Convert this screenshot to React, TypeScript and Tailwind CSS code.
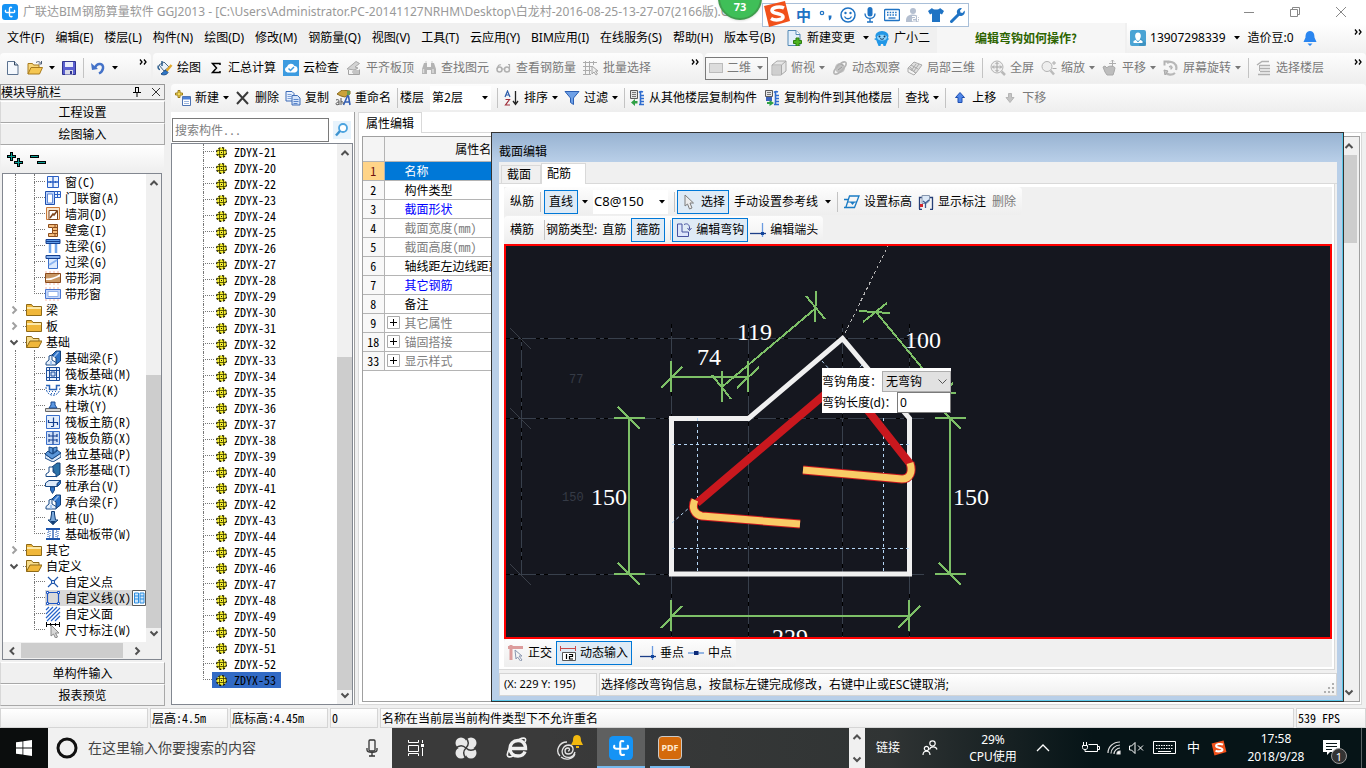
import { useState } from 'react';
import type { ReactNode } from 'react';
import clsx from 'clsx';

// ---------- shared bits ----------

const SONG = "font-['Noto_Sans_CJK_SC',sans-serif] [font-feature-settings:'hwid']";

function Svg({ children, size = 16, className }: { children: ReactNode; size?: number; className?: string }) {
  return (
    <svg width={size} height={size} viewBox="0 0 16 16" fill="none" className={clsx('shrink-0', className)} aria-hidden="true">
      {children}
    </svg>
  );
}

const ICONS: Record<string, ReactNode> = {
  newDoc: (
    <>
      <path d="M2.500 1.500h7L13 5v9.500H2.500z" fill="#f4f8fd" stroke="#5b7290" />
      <path d="M9.500 1.500V5H13" fill="#c9d8ea" stroke="#33475f" />
    </>
  ),
  open: (
    <>
      <path d="M1 14V3.500h4.500l1 1.500H12V8" fill="#f7d67a" stroke="#a87a1c" />
      <path d="M1 14L4 7.500h11.500L12.500 14z" fill="#f5c752" stroke="#a87a1c" />
      <path d="M9 2.500c2-1.500 4-1 5 1M14.500 1v3h-3" stroke="#4e5d75" />
    </>
  ),
  save: (
    <>
      <path d="M1.500 1.500h13v13h-13z" fill="#5a5fd0" stroke="#30358f" />
      <path d="M4 2h8v5H4z" fill="#e9ecfb" />
      <path d="M4 10h8v4.500H4z" fill="#d9dbe8" />
      <path d="M9 11h2v3H9z" fill="#30358f" />
    </>
  ),
  undo: (
    <>
      <path d="M5 8C7 2 14 3 13 8.500c-.5 2.500-2 4-4 5" stroke="#4472c8" strokeWidth="2.500" />
      <path d="M1 3l1 7 6-1z" fill="#4472c8" />
    </>
  ),
  paint: (
    <>
      <path d="M2 5l5-3 5 5-5 4z" fill="#e9f1fa" stroke="#4a6785" />
      <path d="M1.500 5.500c-1 2 0 4 1.500 4M5 1v5" stroke="#2d5f8f" strokeWidth="1.500" />
      <path d="M14.500 5L9 11.500" stroke="#e2a92c" strokeWidth="2.500" />
      <path d="M9 10.500c-2 0-3 2-5 3.500 2 1.500 6 1 7-1.500z" fill="#2f78c9" stroke="#1c4c86" />
    </>
  ),
  sigma: <path d="M12 5V3.500H4.500L8.500 8l-4 4.500H12V11" stroke="#000" strokeWidth="1.500" />,
  cloud: (
    <>
      <path d="M0 0h16v16H0z" fill="#3c9be0" />
      <path d="M4.500 12.500a3 3 0 01-.5-5.800 4 4 0 017.500-.7 3.300 3.300 0 01.5 6.500z" fill="#fff" />
      <path d="M5.500 8.500l2 2 3.500-3.500" stroke="#3c9be0" strokeWidth="1.500" />
    </>
  ),
  align: (
    <>
      <path d="M1 9l9-7.500 3.500 2L9 7l3 1-4 2-6-1z" fill="#d4d4d4" stroke="#a8a8a8" />
      <path d="M2.500 10v4.500h11v-5M6 12h8M10 9.500v5" fill="none" stroke="#a3a3a3" />
      <path d="M7 10h6v4H7z" fill="#c4c4c4" />
    </>
  ),
  binoc: (
    <>
      <path d="M3 3h3v4h4V3h3l2 6v5h-5v-4H6v4H1V9z" fill="#b4b4b4" />
      <path d="M4 2h2M10 2h2M2.500 9v4M12 9v4" stroke="#dcdcdc" strokeWidth="1.500" />
    </>
  ),
  glasses: (
    <>
      <circle cx="3.500" cy="9.500" r="2.500" stroke="#b0b0b0" strokeWidth="1.500" />
      <circle cx="11" cy="9.500" r="2.500" stroke="#b0b0b0" strokeWidth="1.500" />
      <path d="M6 9h2.500M1 9c1-3 2-5 4-4M13.500 9V4.500H12" stroke="#b0b0b0" strokeWidth="1.200" />
    </>
  ),
  batch: (
    <>
      <path d="M0 2.500h14M0 6.500h9M0 10.500h8M0 14.500h8M2.500 1v14M6.500 1v14M10.500 1v4" stroke="#acacac" />
      <path d="M9 6v8l2-2 2 3 1.500-1-2-3h2.500z" fill="#eee" stroke="#a5a5a5" />
    </>
  ),
  cube: (
    <>
      <path d="M1 5l5-4h9v10l-5 4H1z" fill="#e6e6e6" stroke="#aaa" />
      <path d="M1 5h9.500v10M10.500 5L15 1" stroke="#aaa" />
      <path d="M2 6h8v8H2z" fill="#cfcfcf" />
    </>
  ),
  orbit: (
    <>
      <circle cx="8" cy="8" r="5" fill="#c2c2c2" />
      <path d="M5 6c3-3 6-2 6 0M6 10l4-3" stroke="#9a9a9a" />
      <ellipse cx="8" cy="8" rx="8" ry="3" transform="rotate(-45 8 8)" stroke="#b5b5b5" strokeWidth="1.500" />
    </>
  ),
  part3d: (
    <>
      <path d="M1 8l6-6 8 3-6 8z" fill="#dedede" stroke="#ababab" />
      <path d="M4 5l7 4M3 7l5 6M9 4l-5 7M12 4L7 11M1 8v4l6 3 2-2" stroke="#ababab" />
    </>
  ),
  full: (
    <>
      <circle cx="7" cy="7" r="6" stroke="#b3b3b3" fill="#eee" />
      <path d="M7 2.500v9M2.500 7h9M5.500 4L7 2.500 8.500 4M5.500 10L7 11.500 8.500 10M4 5.500L2.500 7 4 8.500M10 5.500L11.500 7 10 8.500" stroke="#a4a4a4" />
      <path d="M11.500 11.500L15 15" stroke="#b9b9b9" strokeWidth="2.500" />
    </>
  ),
  zoom: (
    <>
      <circle cx="6" cy="6.500" r="5" stroke="#b3b3b3" fill="#eee" />
      <path d="M9.500 10.500L13 14.500" stroke="#bbb" strokeWidth="2.500" />
      <path d="M11 3h4M13 1v4M11.500 8.500h4" stroke="#adadad" />
    </>
  ),
  pan: (
    <>
      <path d="M1 7l2-1 2 2c0-2 7-3 8 0l-1 4-1 3H5l-2-3z" fill="#bdbdbd" stroke="#a8a8a8" />
      <path d="M10.500 0v7M7 3.500h7M9 1.500L10.500 0 12 1.500" stroke="#adadad" />
    </>
  ),
  rotate: (
    <>
      <path d="M.5 1.500h6M1.500.5v5" stroke="#b3b3b3" strokeWidth="2" />
      <path d="M4 3a6 6 0 019 7M12 13a7 7 0 01-10-1" stroke="#b8b8b8" strokeWidth="2.200" />
      <path d="M6 7c1-2 4-1 3 1l-1 1.500M1 10l4 1-3 4z" stroke="#a8a8a8" fill="#c4c4c4" />
    </>
  ),
  floors: (
    <>
      <path d="M1 5L6 1.500h7M4 5.500h10M4 8.500h10M4 11.500h10M2 14.500h12" stroke="#b0b0b0" strokeWidth="1.500" />
      <path d="M3.500 5v6" stroke="#b0b0b0" />
    </>
  ),
  create: (
    <>
      <path d="M7.500 6.500h8v9h-8z" fill="#fff" stroke="#4f74b3" />
      <path d="M8 7h7v2.500H8z" fill="#4a7fd8" />
      <path d="M9 11.500h5M9 13.500h5" stroke="#9db7df" />
      <path d="M3 .5h2v2.500h2.500v2H5v2.500H3V5H.5V3H3z" fill="#f6dc5c" stroke="#9c7d18" />
    </>
  ),
  del: <path d="M2 2l11 12M13 2L2 14" stroke="#3a3a3a" strokeWidth="2" />,
  copy: (
    <>
      <path d="M1 1.500h6l2 2V11H1z" fill="#e8f1ff" stroke="#3d6bb5" />
      <path d="M2.500 4.500h4M2.500 6.500h4M2.500 8.500h4" stroke="#7ea1d8" />
      <path d="M7 5.500h5.500L15 8v7H7z" fill="#d4e4fb" stroke="#3d6bb5" />
      <path d="M8.500 9.500h5M8.500 11.500h5M8.500 13.500h4" stroke="#5b86ca" />
    </>
  ),
  rename: (
    <>
      <path d="M2 4l5-4 8 1v3l-5 3-4-1z" fill="#caa23b" stroke="#8b6a1e" />
      <path d="M12 1h3v4h-3z" fill="#6f9c49" />
      <path d="M8.500 15l4-9h1l1.500 9M10 12h5" stroke="#3560b5" strokeWidth="1.600" />
      <path d="M1 10c2-1 3 0 3 1v4M4 12c-2 0-3 1-3 2s2 1 3 0M6 8v7M6 12c1-1 3 0 2 2" stroke="#555" />
    </>
  ),
  sort: (
    <>
      <path d="M1 7l2.500-6L6 7M2 5h3" stroke="#2b5caa" strokeWidth="1.200" />
      <path d="M1.500 9.500h4l-4 5.500h4.500" stroke="#a02e3a" strokeWidth="1.200" />
      <path d="M11.500 1v12M9 11l2.500 3.500L14 11" stroke="#222" strokeWidth="1.300" />
    </>
  ),
  filter: <path d="M1 1.500h14L9.500 8v6.500l-3-2V8z" fill="#6ea0e6" stroke="#2c5fb3" />,
  copyFrom: (
    <>
      <path d="M1.500.5h7v8h-7z" fill="#e4e4e4" stroke="#5a5a5a" />
      <path d="M3 2.500h4M3 4.500h4M3 6.500h4" stroke="#777" />
      <path d="M10 2.500c1-1 3-1 4-.5M11.500 2v13M11.500 5.500H15M11.500 8.500H15M11.500 11.500H15M10 14.500h5" stroke="#2f6ccf" strokeWidth="1.600" />
      <path d="M8.500 11H6V9l-4 3.500L6 16v-2.500h2.500z" fill="#2fa045" />
    </>
  ),
  copyTo: (
    <>
      <path d="M1.500.5h7v6h-7z" fill="#e4e4e4" stroke="#5a5a5a" />
      <path d="M3 2.500h4M3 4.500h4" stroke="#777" />
      <path d="M10 2.500c1-1 3-1 4-.5M11.500 2v13M11.500 5.500H15M11.500 8.500H15M11.500 11.500H15M10 14.500h5" stroke="#2f6ccf" strokeWidth="1.600" />
      <path d="M2 7h6v4H2z" fill="#3b62bd" />
      <path d="M3 12h2.500v-2L10 13l-4.500 3v-2H3z" fill="#2fa045" />
    </>
  ),
  up: <path d="M8 2.500l4.500 5H10v5H6v-5H3.500z" fill="#4f86e8" stroke="#1f4fb0" />,
  down: <path d="M8 12.500l4-5h-2.500V3.500h-3v4H4z" fill="#c4c4c4" stroke="#b5b5b5" />,
  newChange: (
    <>
      <path d="M1 .5h8l4 4v11H1z" fill="#e2effa" stroke="#5389b5" />
      <path d="M9 .5v4h4" fill="#fff" stroke="#5389b5" />
      <path d="M9 8h3v2.500h2.500v3H12V16H9v-2.500H6.500v-3H9z" fill="#4cb41f" stroke="#2d7d10" />
    </>
  ),
  mascot: (
    <>
      <path d="M2 8C0 4 4 1 8 1s8 3 6 7l1 1-1.500 1.500C13 13 12 14 11.500 16h-2L9 14H7l-.5 2h-2C4 14 3 13 2.500 10.500L0 9z" fill="#2297e6" />
      <path d="M3 6.500c2-2.500 8-2.500 10 0 0 3-2 4-5 4s-5-1-5-4z" fill="#8ed4fb" />
      <circle cx="5.500" cy="6.500" r="1" fill="#123c66" />
      <circle cx="10.500" cy="6.500" r="1" fill="#123c66" />
      <path d="M6 8.500c1.500 1 2.500 1 4 0" stroke="#123c66" />
    </>
  ),
  account: (
    <>
      <rect width="16" height="16" rx="2" fill="#4aa3d4" />
      <path d="M10 8l6 5v3H9z" fill="#2f81b0" opacity=".5" />
      <path d="M8 2.500c3.500 0 3.500 5 1.500 7l3 1.500v2h-9v-2l3-1.500C4.500 7.500 4.500 2.500 8 2.500z" fill="#fff" />
      <path d="M6.500 10L8 12l1.500-2" stroke="#4aa3d4" />
    </>
  ),
  bell: <path d="M8 1c-4 0-4.500 4-4.500 6.500L1.500 12h13l-2-4.500C12.500 5 12 1 8 1zM5.500 13.500L8 16l2.500-2.500z" fill="#2a86f0" />,
  elevation: (
    <>
      <path d="M0 5.500h4M0 13.500h10.500L15 2H5.500L2 13" stroke="#1a7bc4" strokeWidth="1.300" />
      <path d="M4 8h9" stroke="#1a7bc4" />
      <path d="M6 8h5l-2.500 3z" fill="#1a7bc4" />
    </>
  ),
  showMark: (
    <>
      <path d="M1.500 15V3.500H4M14.500 15V3.500H12M1 15.500h3M12 15.500h3" stroke="#253f77" strokeWidth="1.300" />
      <path d="M4 1.500h7.500v5.500l-3 2.500H4z" fill="#dbe8f7" stroke="#8696ae" />
      <path d="M5 7l2.500 2L11 6M7.500 9v5" stroke="#3d5a8f" strokeWidth="1.300" />
      <path d="M2 10h3v3H2z" fill="#d3232a" />
    </>
  ),
  cursor: <path d="M4 1v11l2.500-2 2 5 2.500-1-2-5h3.500z" fill="#ececec" stroke="#7d7d7d" />,
  hook: (
    <>
      <path d="M1.500 2v12.500h11V10H6V2z" fill="#dde6fb" stroke="#47529f" />
      <path d="M8 2.500c4-2 6 1 5.500 5M11.500 6l2 2.500 2-2.500" stroke="#47529f" />
    </>
  ),
  perp: (
    <>
      <path d="M0 11.500h16" stroke="#1d3f88" strokeWidth="1.300" />
      <path d="M12.500 1v14" stroke="#6a9be0" strokeWidth="1.300" />
      <path d="M11 10h3v3h-3z" fill="#11449a" />
    </>
  ),
  mid: (
    <>
      <path d="M0 8h16" stroke="#5d92d8" strokeWidth="1.300" />
      <path d="M6 6h4.500v4H6z" fill="#0d2a78" />
    </>
  ),
  ortho: (
    <>
      <path d="M0 2.500h15M3 0v15" stroke="#dc9c9c" strokeWidth="3" />
      <path d="M7 5l7 6h-3l3 4-1.500 1-3-4-1.500 2z" fill="#f4f4f4" stroke="#8a97b0" />
    </>
  ),
  dynInput: (
    <>
      <path d="M.5 1v5M15.500 1v5M1 3.500h14" stroke="#c94a4a" />
      <path d="M2.500 7.500h13v8h-13z" fill="#fff" stroke="#555" />
      <path d="M6.500 9v5M9 9.500h3.500v2H9.500v2.500h3.500" stroke="#000" strokeWidth="1.200" />
    </>
  ),
  // module tree
  window: (
    <>
      <path d="M2.500 2.500h11v11h-11z" fill="#eaf3ff" stroke="#2a5fc4" />
      <path d="M8 2v12M2 8h12" stroke="#2a5fc4" strokeWidth="1.300" />
      <path d="M5.500 7v2M10.500 7v2" stroke="#2a5fc4" />
    </>
  ),
  doorWindow: (
    <>
      <path d="M.5 1.500h9v13h-9z" fill="#bcd3fa" stroke="#1f4fae" />
      <path d="M2.500 4h5v9h-5z" fill="#fff" stroke="#5d86d6" />
      <path d="M9.500 1.500h6v6h-6zM12.500 1v7M9 4.500h7" fill="#eaf3ff" stroke="#2a5fc4" />
    </>
  ),
  wallHole: (
    <>
      <path d="M1.500 1.500h13v12h-13z" fill="#fbe6cd" stroke="#c97838" />
      <path d="M4 4.500h8.500v9H4z" fill="#fff" stroke="#7c421a" />
      <path d="M5 12l3-4 1 1 3-4" stroke="#7c421a" strokeWidth="1.500" />
    </>
  ),
  niche: (
    <>
      <path d="M3.500 2.500h9v12h-9v-3h4v-6h-4z" fill="#f6bd7c" stroke="#8a4c1c" />
      <path d="M8 5.500h4M8 8.500h4M8 11.500h4M10 3v3M10 12v2" stroke="#8a4c1c" />
    </>
  ),
  linkBeam: (
    <>
      <path d="M1 1.500h14v4H1z" fill="#5f9ce8" stroke="#143f8f" />
      <path d="M1 3.500h14" stroke="#143f8f" />
      <path d="M5 6v9M11 6v9" stroke="#6fa5ec" strokeWidth="2.500" />
    </>
  ),
  lintel: (
    <>
      <path d="M3.500 4.500h9v10h-9z" fill="#dbe9fd" stroke="#3a6fca" />
      <path d="M1 1.500h14v3H1z" fill="#8ab4f0" stroke="#143f8f" />
      <path d="M4 11l8-5" stroke="#8ab4f0" strokeWidth="2" />
    </>
  ),
  stripHole: (
    <>
      <path d="M.5 3.500h15v9H.5z" fill="#c99764" stroke="#8a4a1a" />
      <path d="M1 8.500c5 0 9-1 14-4.500v2.500L6 10H1z" fill="#fff" />
      <path d="M0 14h16M0 2h16" stroke="#f7b7a8" strokeDasharray="2 2" />
    </>
  ),
  stripWindow: (
    <>
      <path d="M.5 3.500h15v9H.5z" fill="#c5d7fa" stroke="#4a76cf" />
      <path d="M3 5.500h10v5H3z" fill="#fff" stroke="#90b0ea" />
      <path d="M0 14h16M0 2h16" stroke="#f7b7a8" strokeDasharray="2 2" />
    </>
  ),
  baseBeam: (
    <>
      <path d="M7 5l4-4h4.500v10L11 14.500V8z" fill="#2c72c8" stroke="#123e75" />
      <path d="M1 15v-2.500l3-2.500V6l3-1v5l4 2.500V15z" fill="#e5effb" stroke="#1a4a86" />
      <path d="M9 7l4.500-5M6 11v4" stroke="#8fb8ea" strokeWidth="1.500" />
    </>
  ),
  raft: (
    <>
      <path d="M1.500 1.500h13v13h-13z" stroke="#1d4f9c" fill="#eaf2fd" />
      <path d="M4.500 1v14M11.500 1v14M1 4.500h14M1 11.500h14" stroke="#1d4f9c" />
      <path d="M6 6h4v4H6z" stroke="#1d4f9c" fill="#cfe0f8" />
    </>
  ),
  sump: (
    <>
      <path d="M1 3.500h3.500v4h7v-4H15" stroke="#2b64b8" strokeWidth="1.500" />
      <path d="M1 5c0 11 14 11 14 0" stroke="#2b64b8" strokeDasharray="2 1" />
      <path d="M4 9.500h1M7 9.500h1M10 9.500h1M6 11.500h1M9 11.500h1" stroke="#2b64b8" />
    </>
  ),
  pier: (
    <>
      <path d="M.5 10.500h15v3H.5z" fill="#d5d5d5" stroke="#686868" />
      <path d="M4 10l2-3V4h4v3l2 3z" fill="#5b96e0" stroke="#1c4a90" />
    </>
  ),
  raftMain: (
    <>
      <path d="M1.500 1.500h13v13h-13z" fill="#e3eefc" stroke="#3a6fca" />
      <path d="M3.500 6v2.500h9V11M8.500 3.500v9M8.500 12.500H6" stroke="#143f8f" strokeWidth="1.200" />
    </>
  ),
  raftNeg: (
    <>
      <path d="M1.500 1.500h13v13h-13z" fill="#cfdff7" stroke="#3a6fca" />
      <path d="M8 2v12M4 4v3M12 4v3M4 6h8M4 10h8M4 9v3M12 9v3" stroke="#143f8f" strokeWidth="1.200" />
    </>
  ),
  isolated: (
    <>
      <path d="M0 8l7 5 9-6v4l-8 5-8-4z" fill="#dce9f9" stroke="#1a4a86" />
      <path d="M0 8l3-3 4 3 5-4 4 3-9 6zM4 1l4 1v6L4 6zM8 2l4-1v4L8 8z" fill="#5b96d8" stroke="#1a4a86" />
    </>
  ),
  strip: (
    <>
      <path d="M7 5l5-4h3v11l-4 3z" fill="#2c72a8" stroke="#123e75" />
      <path d="M1 14.500V12l3-2V5h4v5l3 2v2.500z" fill="#fff" stroke="#1a4a86" />
    </>
  ),
  pileCap: (
    <>
      <path d="M.5 5L4 2.500h11.500L12 5.500v3H.5z" fill="#dce9f9" stroke="#1a4a86" />
      <path d="M5.500 9h4v3l-2 3.500-2-3.500zM12.500 5.500l3-3v3l-3 3z" fill="#2c72c8" stroke="#1a4a86" />
    </>
  ),
  pile: (
    <>
      <path d="M6.500 1.500h3V4l1 6h2.500l-5 4.500L3 10h2.500l1-6z" fill="#7aa8da" stroke="#123e75" />
      <path d="M5 11h6l-3 4z" fill="#123e75" />
    </>
  ),
  slabBand: (
    <>
      <path d="M1 3h14M1 13h14" stroke="#1f56ad" strokeWidth="2" />
      <path d="M8 3v10" stroke="#1f56ad" strokeWidth="1.300" />
      <path d="M3 5h2v6H3zM11 5h2v6h-2z" stroke="#1f56ad" strokeDasharray="1 1" />
    </>
  ),
  cPoint: (
    <>
      <path d="M3 3l10 10M13 3L3 13" stroke="#1f56ad" strokeWidth="1.200" />
      <path d="M6.500 6.500h3v3h-3z" fill="#cfe0f8" stroke="#1f56ad" />
    </>
  ),
  cLine: (
    <>
      <path d="M2.500 2.500h11v11h-11z" stroke="#1f56c4" strokeWidth="1.200" />
      <path d="M1.500 1.500h2v2h-2zM12.500 1.500h2v2h-2zM1.500 12.500h2v2h-2zM12.500 12.500h2v2h-2z" fill="#fff" stroke="#1f56c4" />
    </>
  ),
  cFace: <path d="M1 4l3-3M1 8l7-7M1 12L12 1M2 15L15 2M6 15l9-9M10 15l5-5" stroke="#2563c9" strokeWidth="1.200" />,
  dim: (
    <>
      <path d="M1.500 0v5M14.500 0v5M1 2.500h14M5.500 1v3M10.500 1v3" stroke="#000" />
      <path d="M6 3v11l2.500-2 2 4 2-1-2-4h3.500z" fill="#d8d8d8" stroke="#8a8a8a" />
    </>
  ),
  folder: (
    <>
      <path d="M.5 13.500v-11h5l1.500 2h8.500v9z" fill="#f0b73a" stroke="#8f6a17" />
      <path d="M1 6h14" stroke="#fde9a9" strokeWidth="2" />
    </>
  ),
  folderOpen: (
    <>
      <path d="M.5 13.500v-11h5l1.500 2h6v3" fill="#f7dc8b" stroke="#8f6a17" />
      <path d="M.5 13.500L4 7h12l-3.500 6.500z" fill="#f0b73a" stroke="#8f6a17" />
    </>
  ),
};

function Ico({ name, size }: { name: string; size?: number }) {
  return <Svg size={size}>{ICONS[name]}</Svg>;
}

const Caret = ({ dim }: { dim?: boolean }) => (
  <svg width="6" height="4" viewBox="0 0 6 4" className={clsx('shrink-0', dim ? 'fill-[#777]' : 'fill-black')} aria-hidden="true">
    <path d="M0 0h6L3 3.500z" />
  </svg>
);

const Sep = () => <span className="h-5 w-px shrink-0 bg-[#c3c3c3]" />;

const More = () => (
  <button aria-label="更多" className="mb-3 shrink-0">
    <svg width="8" height="6" viewBox="0 0 8 6" fill="none" stroke="#000" strokeWidth="1.300" aria-hidden="true">
      <path d="M1 .5L3 3 1 5.500M5 .5L7 3 5 5.500" />
    </svg>
  </button>
);

function Tool({ icon, label, arrow, off, on }: { icon?: string; label: string; arrow?: boolean; off?: boolean; on?: boolean }) {
  return (
    <button
      disabled={off}
      className={clsx(
        'flex shrink-0 items-center gap-1 whitespace-nowrap',
        off ? 'text-[#7a7a7a]' : 'text-black',
        on && 'h-6 border border-[#0078d7] bg-[#dfebf6] px-[3px]',
      )}
    >
      {icon && <Ico name={icon} />}
      {label}
      {arrow && <Caret dim={off} />}
    </button>
  );
}

function Arrow({ dir, soft }: { dir: 'up' | 'down' | 'left' | 'right'; soft?: boolean }) {
  const d = {
    up: 'M1.500 7L5 3.500 8.500 7',
    down: 'M1.500 3.500L5 7l3.500-3.500',
    left: 'M7 1.500L3.500 5 7 8.500',
    right: 'M3.500 1.500L7 5 3.500 8.500',
  };
  return (
    <svg width="10" height="10" viewBox="0 0 10 10" fill="none" stroke={soft ? '#a0a0a0' : '#505050'} strokeWidth="2" className="shrink-0" aria-hidden="true">
      <path d={d[dir]} />
    </svg>
  );
}

// ---------- title + menu ----------

const AppLogo = ({ size = 16 }: { size?: number }) => (
  <Svg size={size}>
    <rect width="16" height="16" rx="3" fill="#1593f5" />
    <path d="M9.500 3.500C8 3 7.500 3.500 7.500 5v6c0 1.500 1 2 2.500 1.500M3.500 6.500C3 8 4 8.500 5 8.500h6.500c1 0 1.500-.5 1-2" stroke="#fff" strokeWidth="1.400" strokeLinecap="round" />
  </Svg>
);

const SogouLogo = ({ size }: { size: number }) => (
  <svg width={size} height={size} viewBox="0 0 28 28" fill="none" className="shrink-0" aria-hidden="true">
    <path d="M1 6L22 1l5 20L6 27z" fill="#f1511b" />
    <path d="M21 8c-4-2-12-1-12 2.500 0 4 11 2 11 6.500 0 3-8 4-12 1.500" stroke="#fff" strokeWidth="3.600" />
  </svg>
);

function ImeBar() {
  return (
    <div className="absolute left-[718px] top-0 z-30 flex items-start">
      <div className="-mt-6 flex h-11 w-11 items-end justify-center rounded-full border-2 border-[#3f9e4d] bg-[#3fbf58] pb-[2px] text-[11px] font-bold leading-[18px] text-white shadow">
        73
      </div>
      <div className="mt-[3px] flex h-6 items-center gap-[6px] border border-[#a9bfd8] bg-white pl-[33px] pr-[2px] text-[#1f73c4]">
        <span className="absolute left-[45px] top-0"><SogouLogo size={28} /></span>
        <span className="w-4 text-[15px] font-bold leading-4">中</span>
        <Svg>
          <circle cx="4" cy="6" r="1.700" stroke="#1f73c4" strokeWidth="1.200" />
          <path d="M10.500 8.500h3c0 3-.5 4-2.500 5" fill="#1f73c4" />
        </Svg>
        <Svg>
          <circle cx="8" cy="8" r="7" stroke="#1f73c4" strokeWidth="1.500" />
          <path d="M4.500 9.500c1.500 3 5.500 3 7 0" stroke="#1f73c4" strokeWidth="1.300" />
          <circle cx="5.500" cy="6" r="1.200" fill="#1f73c4" />
          <circle cx="10.500" cy="6" r="1.200" fill="#1f73c4" />
        </Svg>
        <Svg>
          <rect x="5.500" y="0" width="5" height="9.500" rx="2.500" fill="#1f73c4" />
          <path d="M3 6.500c0 6.500 10 6.500 10 0M8 11.500V15M5 15h6" stroke="#1f73c4" strokeWidth="1.400" />
        </Svg>
        <Svg>
          <rect x=".5" y="2.500" width="15" height="11" rx="1" stroke="#1f73c4" strokeWidth="1.400" />
          <path d="M3 5.500h10M3 8h10" stroke="#1f73c4" strokeWidth="1.400" strokeDasharray="1.500 1.200" />
          <path d="M4.500 11h7" stroke="#1f73c4" strokeWidth="1.300" />
        </Svg>
        <Svg>
          <circle cx="7" cy="4" r="3" fill="#b4bfd0" />
          <path d="M0 13c0-7 12-7 13-2v4H0z" fill="#b4bfd0" />
          <path d="M6 9.500h3.500v2H6.500V14H10M11.500 9.500h3.500M11.500 9v5h3.500v-2.500h-3" stroke="#fff" />
        </Svg>
        <Svg>
          <path d="M0 4l4-3c1 2 7 2 8 0l4 3-2 3.500-2-1V15H4V6.500l-2 1z" fill="#1f73c4" />
        </Svg>
        <Svg>
          <path d="M1.500 14.500L9 7" stroke="#1f73c4" strokeWidth="3" strokeLinecap="round" />
          <path d="M14.500 3.500A4 4 0 1112 1.200L10 3.500l.5 2 2 .5z" fill="#1f73c4" />
        </Svg>
      </div>
    </div>
  );
}

const MENUS = [
  '文件(F)', '编辑(E)', '楼层(L)', '构件(N)', '绘图(D)', '修改(M)', '钢筋量(Q)', '视图(V)',
  '工具(T)', '云应用(Y)', 'BIM应用(I)', '在线服务(S)', '帮助(H)', '版本号(B)',
];

function TitleBar() {
  return (
    <header className="relative flex h-[23px] shrink-0 items-center bg-white pl-[2px]">
      <AppLogo />
      <h1 className="ml-[5px] flex-1 overflow-hidden whitespace-pre text-xs text-[#999]">
        广联达BIM钢筋算量软件 GGJ2013 - [C:\Users\Administrator.PC-20141127NRHM\Desktop\白龙村-2016-08-25-13-27-07(2166版).GGJ]
      </h1>
      <div className="flex gap-9 pr-5">
        <button aria-label="最小化">
          <svg width="10" height="10" stroke="#888" aria-hidden="true"><path d="M0 5.500h10" /></svg>
        </button>
        <button aria-label="还原">
          <svg width="10" height="10" stroke="#888" fill="none" aria-hidden="true"><path d="M.5 2.500h7v7h-7zM2.500 2.500v-2h7v7h-2" /></svg>
        </button>
        <button aria-label="关闭">
          <svg width="10" height="10" stroke="#888" aria-hidden="true"><path d="M0 0l10 10M10 0L0 10" /></svg>
        </button>
      </div>
      <ImeBar />
    </header>
  );
}

function MenuBar() {
  return (
    <nav className="flex h-[30px] shrink-0 items-stretch bg-[#f0f0f0]">
      <div className="flex items-center gap-[11px] pl-[7px]">
        {MENUS.map((m) => (
          <button key={m} className="whitespace-nowrap">{m}</button>
        ))}
      </div>
      <div className="ml-3 flex items-center gap-[5px] pr-[7px]">
        <button className="flex items-center gap-1 whitespace-nowrap">
          <Ico name="newChange" />
          <span className="mr-1">新建变更</span>
          <Caret />
        </button>
        <Tool icon="mascot" label="广小二" />
      </div>
      <div className="flex w-[188px] items-center bg-[#f6f6f6] pl-[38px]">
        <a href="#help" className={clsx('whitespace-nowrap font-bold text-[#2d6400]', SONG)}>编辑弯钩如何操作?</a>
      </div>
      <div className="ml-[2px] flex flex-1 items-center gap-2 bg-linear-to-b from-white to-[#f0f0f0] pl-[3px] pr-1">
        <button className="flex items-center gap-1 whitespace-nowrap">
          <Ico name="account" />
          <span className="mr-1">13907298339</span>
          <Caret />
        </button>
        <button className="whitespace-nowrap">造价豆:0</button>
        <Ico name="bell" />
        <span className="flex-1" />
        <More />
      </div>
    </nav>
  );
}

const BAR = 'flex items-center rounded-sm bg-linear-to-b from-[#fdfdfd] to-[#eeeeee]';

function MainToolbar() {
  return (
    <div className="flex h-[30px] shrink-0 gap-[2px] bg-[#f0f0f0]">
      <div className={clsx(BAR, 'w-[151px] shrink-0 gap-[6px] pl-[5px] pr-1')}>
        <button aria-label="新建"><Ico name="newDoc" /></button>
        <button aria-label="打开" className="flex items-center gap-[6px]"><Ico name="open" /><Caret /></button>
        <button aria-label="保存"><Ico name="save" /></button>
        <Sep />
        <button aria-label="撤销" className="flex items-center gap-[6px]"><Ico name="undo" /><Caret /></button>
        <span className="flex-1" />
        <More />
      </div>
      <div className={clsx(BAR, 'w-[550px] shrink-0 gap-[7px] pl-1 pr-1')}>
        <Tool icon="paint" label="绘图" />
        <Tool icon="sigma" label="汇总计算" />
        <Tool icon="cloud" label="云检查" />
        <Tool icon="align" label="平齐板顶" off />
        <Tool icon="binoc" label="查找图元" off />
        <Tool icon="glasses" label="查看钢筋量" off />
        <Tool icon="batch" label="批量选择" off />
        <span className="flex-1" />
        <More />
      </div>
      <div className={clsx(BAR, 'flex-1 gap-[7px] pr-1')}>
        <label className="-mr-1 flex h-[23px] items-center border border-[#7a7a7a] pl-[3px] pr-1 text-[#7a7a7a]">
          <span className="h-[10px] w-[14px] border border-[#bbb] bg-[#dcdcdc]" />
          <select aria-label="视图模式" disabled className="ml-[4px] w-[30px] appearance-none text-xs">
            <option>二维</option>
          </select>
          <Caret dim />
        </label>
        <Tool icon="cube" label="俯视" arrow off />
        <Tool icon="orbit" label="动态观察" off />
        <Tool icon="part3d" label="局部三维" off />
        <Sep />
        <Tool icon="full" label="全屏" off />
        <Tool icon="zoom" label="缩放" arrow off />
        <Tool icon="pan" label="平移" arrow off />
        <Tool icon="rotate" label="屏幕旋转" arrow off />
        <Sep />
        <Tool icon="floors" label="选择楼层" off />
        <span className="flex-1" />
        <More />
      </div>
    </div>
  );
}

function ComponentToolbar() {
  return (
    <div className={clsx(BAR, 'h-[28px] shrink-0 gap-[6px] pl-1')}>
      <Tool icon="create" label="新建" arrow />
      <Tool icon="del" label="删除" />
      <Tool icon="copy" label="复制" />
      <Tool icon="rename" label="重命名" />
      <Sep />
      <label htmlFor="floor" className="-ml-1 whitespace-nowrap">楼层</label>
      <span className="flex h-6 items-center bg-white pr-[3px]">
        <select id="floor" className="w-[52px] appearance-none pl-[2px] text-xs">
          <option>第2层</option>
          <option>第1层</option>
        </select>
        <Caret />
      </span>
      <Sep />
      <Tool icon="sort" label="排序" arrow />
      <Tool icon="filter" label="过滤" arrow />
      <Sep />
      <div className="-ml-[2px] flex items-center gap-[7px]">
        <Tool icon="copyFrom" label="从其他楼层复制构件" />
        <Tool icon="copyTo" label="复制构件到其他楼层" />
      </div>
      <Sep />
      <Tool label="查找" arrow />
      <Sep />
      <Tool icon="up" label="上移" />
      <Tool icon="down" label="下移" off />
    </div>
  );
}

// ---------- module navigation ----------

type Leaf = { label: string; icon: string };
type Group = { label: string; open?: boolean; items?: Leaf[] };

const LEAD: Leaf[] = [
  { label: '窗(C)', icon: 'window' },
  { label: '门联窗(A)', icon: 'doorWindow' },
  { label: '墙洞(D)', icon: 'wallHole' },
  { label: '壁龛(I)', icon: 'niche' },
  { label: '连梁(G)', icon: 'linkBeam' },
  { label: '过梁(G)', icon: 'lintel' },
  { label: '带形洞', icon: 'stripHole' },
  { label: '带形窗', icon: 'stripWindow' },
];

const GROUPS: Group[] = [
  { label: '梁' },
  { label: '板' },
  {
    label: '基础',
    open: true,
    items: [
      { label: '基础梁(F)', icon: 'baseBeam' },
      { label: '筏板基础(M)', icon: 'raft' },
      { label: '集水坑(K)', icon: 'sump' },
      { label: '柱墩(Y)', icon: 'pier' },
      { label: '筏板主筋(R)', icon: 'raftMain' },
      { label: '筏板负筋(X)', icon: 'raftNeg' },
      { label: '独立基础(P)', icon: 'isolated' },
      { label: '条形基础(T)', icon: 'strip' },
      { label: '桩承台(V)', icon: 'pileCap' },
      { label: '承台梁(F)', icon: 'baseBeam' },
      { label: '桩(U)', icon: 'pile' },
      { label: '基础板带(W)', icon: 'slabBand' },
    ],
  },
  { label: '其它' },
  {
    label: '自定义',
    open: true,
    items: [
      { label: '自定义点', icon: 'cPoint' },
      { label: '自定义线(X)', icon: 'cLine' },
      { label: '自定义面', icon: 'cFace' },
      { label: '尺寸标注(W)', icon: 'dim' },
    ],
  },
];

function Branch({ last }: { last: boolean }) {
  return (
    <span className="h-4 w-[11px] shrink-0">
      <span className="block h-2 border-b border-l border-dotted border-[#777]" />
      {!last && <span className="block h-2 border-l border-dotted border-[#777]" />}
    </span>
  );
}

function Leaves({ items, trunk, picked, onPick }: { items: Leaf[]; trunk: boolean; picked: string; onPick: (s: string) => void }) {
  return (
    <ul>
      {items.map((it, i) => (
        <li key={it.label} className="flex h-4 pl-3">
          <span className={clsx('h-4 w-[19px] shrink-0', trunk && 'border-l border-dotted border-[#777]')} />
          <Branch last={i === items.length - 1} />
          <button
            onClick={() => onPick(it.label)}
            className={clsx('flex h-4 items-center whitespace-nowrap', picked === it.label && 'bg-[#d9d9d9]')}
          >
            <Ico name={it.icon} />
            <span className="ml-1">{it.label}</span>
            {picked === it.label && (
              <svg width="14" height="16" viewBox="0 0 14 16" className="ml-px" aria-hidden="true">
                <path d="M.5.5h13v15H.5z" fill="#fff" stroke="#5a5a5a" />
                <path d="M2.500 3h4v10h-4zM8 3h4v10H8zM2.500 6h4M2.500 9h4M8 6h4M8 9h4" fill="#cfe6fb" stroke="#2b8de0" />
              </svg>
            )}
          </button>
        </li>
      ))}
    </ul>
  );
}

const NAV_BTN = 'h-[22px] w-full shrink-0 border border-[#a8a8a8] border-l-[#d8d8d8] border-t-white bg-[#f0f0f0] text-center text-xs';

function ModulePanel() {
  const [picked, setPicked] = useState('自定义线(X)');
  return (
    <aside className={clsx('flex w-[165px] shrink-0 flex-col', SONG)}>
      <div className="flex h-4 items-center border border-[#999] pr-1">
        <span className="flex-1">模块导航栏</span>
        <button aria-label="固定" className="mr-[11px]">
          <svg width="8" height="10" fill="none" stroke="#000" aria-hidden="true"><path d="M2.500 0v5.500M5.500 0v5.500M2 .5h4M0 5.500h8M4 6v4" /></svg>
        </button>
        <button aria-label="关闭导航栏">
          <svg width="8" height="8" stroke="#333" aria-hidden="true"><path d="M0 0l8 8M8 0L0 8" /></svg>
        </button>
      </div>
      <button className={clsx(NAV_BTN, 'mt-px')}>工程设置</button>
      <button className={NAV_BTN}>绘图输入</button>
      <div className="mx-px flex h-[28px] shrink-0 items-center gap-[7px] bg-linear-to-b from-white to-[#eee] pl-[6px]">
        <button aria-label="全部展开">
          <svg width="16" height="15" viewBox="0 0 16 15" aria-hidden="true">
            <path d="M4.500 0v9M0 4.500h9M11.500 6v9M7 10.500h9" stroke="#000" strokeWidth="3" />
            <path d="M4.500 1v7M1 4.500h7M11.500 7v7M8 10.500h7" stroke="#0b9f96" />
          </svg>
        </button>
        <button aria-label="全部折叠">
          <svg width="16" height="15" viewBox="0 0 16 15" aria-hidden="true">
            <path d="M0 4.500h9M7 10.500h9" stroke="#000" strokeWidth="3" />
            <path d="M1 4.500h7M8 10.500h7" stroke="#0b9f96" />
          </svg>
        </button>
      </div>
      <div className="ml-[2px] mr-[3px] flex min-h-0 flex-1 flex-col border border-[#828790] bg-white">
        <div className="flex min-h-0 flex-1">
          <div className="flex-1 overflow-hidden">
            <Leaves items={LEAD} trunk picked={picked} onPick={setPicked} />
            {GROUPS.map((g, i) => (
              <div key={g.label}>
                <button className="flex h-4 items-center pl-[6px]">
                  <Arrow dir={g.open ? 'down' : 'right'} soft={!g.open} />
                  <span className="ml-1 w-[3px] border-b border-dotted border-[#777]" />
                  <Ico name={g.open ? 'folderOpen' : 'folder'} />
                  <span className="ml-1">{g.label}</span>
                </button>
                {g.items && <Leaves items={g.items} trunk={i < GROUPS.length - 1} picked={picked} onPick={setPicked} />}
              </div>
            ))}
          </div>
          <div className="flex w-[15px] shrink-0 flex-col items-center bg-[#f0f0f0] py-1">
            <Arrow dir="up" />
            <span className="flex-[185]" />
            <span className="w-full flex-[251] bg-[#cdcdcd]" />
            <Arrow dir="down" />
          </div>
        </div>
        <div className="flex h-[17px] shrink-0 items-center bg-[#f0f0f0] pl-1">
          <Arrow dir="left" />
          <span className="ml-1 h-[15px] w-[102px] bg-[#cdcdcd]" />
          <span className="w-[9px]" />
          <Arrow dir="right" />
        </div>
      </div>
      <div className="mt-[2px]">
        <button className={NAV_BTN}>单构件输入</button>
        <button className={NAV_BTN}>报表预览</button>
      </div>
    </aside>
  );
}

// ---------- component list ----------

const PARTS = [21, 20, ...Array.from({ length: 32 }, (_, i) => i + 22)].map((n) => `ZDYX-${n}`);

const Gear = () => (
  <svg width="11" height="11" viewBox="0 0 11 11" fill="none" className="mr-px shrink-0" aria-hidden="true">
    <circle cx="5.500" cy="5.500" r="5" fill="#f5ee30" />
    <circle cx="5.500" cy="5.500" r="4.900" stroke="#101000" strokeWidth="1.200" strokeDasharray="2.100 1.750" />
    <path d="M3.500 1v9M7.500 1v9M1 3.500h9M1 7.500h9" stroke="#3c3a00" strokeWidth=".8" />
    <path d="M4 4h3v3H4z" fill="#f5ee30" />
    <path d="M5 5h1v1H5z" fill="#101000" />
  </svg>
);

function ComponentList() {
  const [sel, setSel] = useState('ZDYX-53');
  return (
    <section className={clsx('flex w-[184px] shrink-0 flex-col border-r border-[#a0a0a0] bg-white pr-px', SONG)}>
      <div className="flex h-[31px] shrink-0 items-center gap-1 pl-px pt-1">
        <input
          aria-label="搜索构件"
          placeholder="搜索构件..."
          className="h-6 w-[157px] border border-[#7a7a7a] bg-white px-[2px] text-xs text-black placeholder:text-[#808080]"
        />
        <button aria-label="搜索" className="bg-[#e7f3fc] p-px">
          <svg width="16" height="16" viewBox="0 0 16 16" fill="none" aria-hidden="true">
            <circle cx="9" cy="6" r="4" stroke="#4ba3df" strokeWidth="1.800" fill="#fff" />
            <path d="M6 9l-4 4.500" stroke="#3d93d0" strokeWidth="2.500" />
          </svg>
        </button>
      </div>
      <div className="flex min-h-0 flex-1 border border-[#828790]">
        <ul className="flex-1 overflow-hidden">
          {PARTS.map((p, i) => (
            <li key={p} className="flex h-4 pl-[31px]">
              <Branch last={i === PARTS.length - 1} />
              <button
                onClick={() => setSel(p)}
                className={clsx('-ml-[2px] flex h-4 w-[69px] items-center gap-[6px] pl-1', sel === p && 'bg-[#316ac5]')}
              >
                <Gear />
                <span className="whitespace-nowrap">{p}</span>
              </button>
            </li>
          ))}
        </ul>
        <div className="flex w-[15px] shrink-0 flex-col items-center bg-[#f0f0f0] py-1">
          <Arrow dir="up" />
          <span className="flex-[198]" />
          <span className="w-full flex-[331] bg-[#cdcdcd]" />
          <Arrow dir="down" />
        </div>
      </div>
    </section>
  );
}

// ---------- property grid ----------

const PROPS = [
  { no: 1, label: '名称', tone: 'text-white' },
  { no: 2, label: '构件类型', tone: 'text-black' },
  { no: 3, label: '截面形状', tone: 'text-[#0000ff]' },
  { no: 4, label: '截面宽度(mm)', tone: 'text-[#808080]' },
  { no: 5, label: '截面高度(mm)', tone: 'text-[#808080]' },
  { no: 6, label: '轴线距左边线距离', tone: 'text-black' },
  { no: 7, label: '其它钢筋', tone: 'text-[#0000ff]' },
  { no: 8, label: '备注', tone: 'text-black' },
  { no: 9, label: '其它属性', tone: 'text-[#808080]', plus: true },
  { no: 18, label: '锚固搭接', tone: 'text-[#808080]', plus: true },
  { no: 33, label: '显示样式', tone: 'text-[#808080]', plus: true },
];

function PropertyPanel() {
  return (
    <section className={clsx('ml-[3px] flex min-w-0 flex-1 flex-col bg-[#f0f0f0]', SONG)}>
      <div className="flex h-[21px] shrink-0 bg-white">
        <button className="w-16 border border-b-0 border-[#d9d9d9] bg-white text-center">属性编辑</button>
        <span className="flex-1 border-b border-[#d9d9d9]" />
      </div>
      <div className="mr-1 flex min-h-0 flex-1 border-x border-b border-[#d9d9d9] bg-white pb-[2px] pl-[3px] pr-px pt-[3px]">
        <div className="flex flex-1 border border-[#a0a0a0] bg-white">
          <table className="h-max w-[211px] table-fixed border-collapse">
            <thead>
              <tr className="h-6">
                <th aria-label="序号" className="w-[21px] border-b border-r border-[#b4b4b4] bg-[#f4f4f4]" />
                <th className="border-b border-[#b4b4b4] bg-[#f4f4f4] font-normal">属性名称</th>
              </tr>
            </thead>
            <tbody>
              {PROPS.map((p) => (
                <tr key={p.no} className="h-[19px]">
                  <td className={clsx('border-b border-r border-[#b4b4b4] text-center', p.no === 1 ? 'bg-[#ffd488] text-[#701010]' : 'bg-[#f8f8f8]')}>
                    {p.no}
                  </td>
                  <td className={clsx('border-b border-[#b4b4b4]', p.no === 1 && 'bg-[#0078d7]', p.tone)}>
                    <div className="flex items-center whitespace-nowrap">
                      <span className="w-5 pl-[2px]">
                        {p.plus && (
                          <button aria-label="展开" className="block">
                            <svg width="13" height="13" fill="#fff" stroke="#aaa" aria-hidden="true">
                              <path d="M.5.5h12v12H.5z" />
                              <path d="M3 6.500h7M6.500 3v7" stroke="#000" />
                            </svg>
                          </button>
                        )}
                      </span>
                      {p.label}
                    </div>
                  </td>
                </tr>
              ))}
            </tbody>
          </table>
          <span className="flex-1" />
          <div className="flex w-5 shrink-0 flex-col items-center bg-[#f0f0f0] py-1">
            <Arrow dir="up" />
            <span className="my-1 w-4 flex-1 bg-[#cdcdcd]" />
            <span className="flex-[5]" />
            <Arrow dir="down" />
          </div>
        </div>
      </div>
    </section>
  );
}

// ---------- section drawing ----------

const DIMS = [
  // 74
  'M165 131H242M165 115v31M242 115v31M155 142l21-21M231 142l22-21',
  // 119
  'M216 141L310 62M216 125v31M206 129l19 24M310 45l-1 31M300 50l19 23',
  // 100
  'M370 66L436 146M353 65l31 2M357 76l24-19M420 146l30 1M424 156l23-19',
  // left 150
  'M123 172V328M108 172h31M112 161l22 22M108 328h31M112 317l22 22',
  // right 150
  'M444 172V328M429 172h31M433 161l22 22M429 328h31M433 317l22 22',
  // 229
  'M165 370H403M165 354v31M403 354v31M155 382l21-22M392 382l22-22',
];

const AXES = 'M0 92.500H418M0 172.500H418M0 328.500H418M165.500 78V391M242.500 78V391M336.500 78V391M403.500 78V391M15.500 92V328';

const DIM_TEXT: [number, number, string][] = [
  [231, 94, '119'],
  [191, 119, '74'],
  [399, 102, '100'],
  [85, 259, '150'],
  [447, 259, '150'],
  [266, 399, '229'],
];

const HOOKS = ['M189 254C185 262 189 269 196 270L294 278', 'M404 217C407 226 404 233 396 233L297 224'];

function SectionCanvas() {
  return (
    <div className="relative min-h-0 flex-1 overflow-hidden border-2 border-[#ff0000] bg-[#15171f]">
      <svg width="824" height="391" viewBox="0 0 824 391" fill="none" className="block" role="img" aria-label="截面配筋图">
        <path d={AXES} stroke="#38404c" />
        <path d={AXES} stroke="#000" strokeDasharray="4 4 4 18" />
        <path d="M4 82l21 21M4 162l21 21M4 318l21 21" stroke="#3a3f48" />
        <g fill="#353b46" fontSize="12" fontFamily="'Liberation Mono', monospace">
          <text x="63" y="137">77</text>
          <text x="56" y="255">150</text>
        </g>
        <path d="M339 87L382 0" stroke="#b5b5b5" strokeDasharray="3 3" shapeRendering="crispEdges" />
        {DIMS.map((d) => (
          <path key={d} d={d} stroke="#7dc067" strokeWidth="2" shapeRendering="crispEdges" />
        ))}
        <path d="M165.500 172.500H242.500L336.500 92.500L403.500 172.500V328H165.500Z" stroke="#f0f0f0" strokeWidth="5" />
        <path
          d="M166 198.500H404M166 302.500H404M191.500 172V328M377.500 172V328M166 277L184 261M316 115l8 9M356 119l-8 9"
          stroke="#b5d6f5"
          strokeDasharray="3 3"
        />
        <path d="M191 257L337 133L405 219" stroke="#c9181e" strokeWidth="8" />
        {HOOKS.map((d) => (
          <g key={d}>
            <path d={d} stroke="#c9181e" strokeWidth="9" />
            <path d={d} stroke="#f9cb66" strokeWidth="7" />
          </g>
        ))}
        <g fill="#fff" fontSize="24" fontFamily="'Liberation Serif', serif">
          {DIM_TEXT.map(([x, y, t]) => (
            <text key={`${x}-${y}`} x={x} y={y}>{t}</text>
          ))}
        </g>
      </svg>

      {/* floating hook editor */}
      <div className="absolute left-[316px] top-[122px] flex w-[129px] flex-col bg-white pt-[3px]">
        <div className="flex h-[21px] items-center">
          <label htmlFor="hook-angle" className="flex-1 whitespace-nowrap">弯钩角度：</label>
          <div className="relative">
            <select id="hook-angle" className="h-[21px] w-[69px] appearance-none border border-[#adadad] bg-[#e1e1e1] pl-[3px] text-xs">
              <option>无弯钩</option>
              <option>90</option>
              <option>135</option>
              <option>180</option>
            </select>
            <svg width="9" height="6" className="pointer-events-none absolute right-1 top-2" fill="none" stroke="#555" aria-hidden="true">
              <path d="M.5.500l4 4 4-4" />
            </svg>
          </div>
        </div>
        <div className="flex h-[21px] items-center">
          <label htmlFor="hook-len" className="flex-1 whitespace-nowrap">弯钩长度(d)：</label>
          <input id="hook-len" defaultValue="0" className="h-[21px] w-[54px] border border-[#7a7a7a] bg-white px-[2px] text-xs" />
        </div>
      </div>
    </div>
  );
}

function SectionDialog() {
  const [tab, setTab] = useState('配筋');
  return (
    <div
      role="dialog"
      aria-label="截面编辑"
      className="absolute bottom-1 left-[491px] right-[22px] top-[49px] z-10 flex flex-col border border-[#333] bg-[#b9cfe8] pb-[5px] pl-[7px] pr-[6px] shadow-[inset_-1px_-1px_0_#58c6e8]"
    >
      <h2 className="-ml-[7px] -mr-[5px] flex h-[29px] shrink-0 items-center bg-linear-to-b from-[#98b3d2] to-[#b9cfe8] pl-[7px] pt-2">截面编辑</h2>
      <div className="flex min-h-0 flex-1 flex-col bg-[#f0f0f0]">
        <div className="flex h-[22px] shrink-0 items-end border-b border-[#d9d9d9] pl-[2px]">
          {['截面', '配筋'].map((t) => (
            <button
              key={t}
              onClick={() => setTab(t)}
              className={clsx(
                'border border-b-0 border-[#d9d9d9] pl-[5px] text-left',
                tab === t ? '-mb-px h-[21px] w-[45px] bg-white' : 'h-[18px] w-10',
              )}
            >
              {t}
            </button>
          ))}
        </div>
        <div className="mr-[2px] flex min-h-0 flex-1 flex-col border-b border-r border-[#d9d9d9] bg-white pb-[2px] pl-[5px] pr-[2px] pt-[3px]">
          <div className="flex h-[57px] shrink-0 flex-col items-start bg-[#f0f0f0]">
            <div className={clsx(BAR, 'h-[28px] gap-[6px] pl-[6px] pr-[6px] pt-px')}>
              <button>纵筋</button>
              <Sep />
              <div className="-ml-[3px] flex items-center gap-1">
                <button className="h-6 border border-[#0078d7] bg-[#dfebf6] px-1">直线</button>
                <Caret />
              </div>
              <span className="-ml-px flex h-6 items-center bg-white pr-[3px]">
                <select aria-label="钢筋规格" className="w-[66px] appearance-none pl-px text-[13px]">
                  <option>C8@150</option>
                </select>
                <Caret />
              </span>
              <Sep />
              <div className="-ml-1 flex items-center gap-[5px]">
                <Tool icon="cursor" label="选择" on />
                <button className="flex items-center gap-[7px] whitespace-nowrap">手动设置参考线<Caret /></button>
              </div>
              <Sep />
              <Tool icon="elevation" label="设置标高" />
              <Tool icon="showMark" label="显示标注" />
              <Tool label="删除" off />
            </div>
            <div className={clsx(BAR, 'mt-px h-[28px] gap-[5px] pl-[6px] pr-[5px]')}>
              <button>横筋</button>
              <span className="w-0" />
              <Sep />
              <span className="-ml-1 whitespace-nowrap">钢筋类型:</span>
              <button>直筋</button>
              <button className="h-6 border border-[#0078d7] bg-[#dfebf6] px-1">箍筋</button>
              <Sep />
              <div className="-ml-1 flex items-center gap-[2px]">
                <Tool icon="hook" label="编辑弯钩" on />
                <Tool icon="perp" label="编辑端头" />
              </div>
            </div>
          </div>
          <SectionCanvas />
          <div className="flex h-[28px] shrink-0 items-center bg-[#f0f0f0]">
            <div className={clsx(BAR, 'h-[28px] gap-1 pl-1 pr-1')}>
              <Tool icon="ortho" label="正交" />
              <Tool icon="dynInput" label="动态输入" on />
              <span className="w-0" />
              <Tool icon="perp" label="垂点" />
              <Tool icon="mid" label="中点" />
            </div>
          </div>
        </div>
        <div className="mt-[3px] flex h-[23px] shrink-0 gap-[2px]">
          <span className="flex w-[98px] items-center border border-[#d5d5d5] bg-[#f7f7f7] pl-1 text-[11px]">(X: 229 Y: 195)</span>
          <span className="flex flex-1 items-center justify-between border border-[#d5d5d5] bg-linear-to-b from-white to-[#f0f0f0] pl-px">
            选择修改弯钩信息，按鼠标左键完成修改，右键中止或ESC键取消;
            <svg width="12" height="12" fill="#b0b0b0" className="self-end" aria-hidden="true">
              <path d="M8 0h2v2H8zM4 4h2v2H4zM8 4h2v2H8zM0 8h2v2H0zM4 8h2v2H4zM8 8h2v2H8z" />
            </svg>
          </span>
        </div>
      </div>
    </div>
  );
}

// ---------- status + taskbar ----------

const CELL = 'flex items-center border border-[#d5d5d5] bg-linear-to-b from-white to-[#f0f0f0] pl-px whitespace-nowrap';

function StatusBar() {
  return (
    <footer className={clsx('flex h-[22px] shrink-0 gap-[2px] bg-[#f0f0f0] pt-[2px]', SONG)}>
      <span className={clsx(CELL, 'w-[148px]')} />
      <span className={clsx(CELL, 'w-[78px]')}>层高:4.5m</span>
      <span className={clsx(CELL, 'w-[98px]')}>底标高:4.45m</span>
      <span className={clsx(CELL, 'w-12')}>0</span>
      <span className={clsx(CELL, 'flex-1')}>名称在当前层当前构件类型下不允许重名</span>
      <span className={clsx(CELL, 'w-[70px]')}>539 FPS</span>
    </footer>
  );
}

const TASK = 'flex h-10 items-center justify-center';

function Taskbar() {
  return (
    <div className="flex h-10 shrink-0 items-center bg-linear-to-r from-[#3a3a3a] from-40% via-[#303434] via-65% to-[#061417] to-80% text-white">
      <button aria-label="开始" className={clsx(TASK, 'w-12 shrink-0 bg-[#0b0d0d]')}>
        <svg width="16" height="16" viewBox="0 0 16 16" fill="#fff" aria-hidden="true">
          <path d="M0 2.300L6.500 1.400v6.200H0zM7.300 1.300L16 0v7.600H7.300zM0 8.400h6.500v6.200L0 13.700zM7.300 8.400H16V16l-8.700-1.300z" />
        </svg>
      </button>
      <label className="flex h-10 w-[344px] shrink-0 items-center bg-[#f1f1f1] pl-2 pr-3 text-[#444]">
        <svg width="22" height="22" viewBox="0 0 22 22" fill="none" aria-hidden="true">
          <circle cx="11" cy="11" r="9" stroke="#111" strokeWidth="3" />
        </svg>
        <input aria-label="搜索" placeholder="在这里输入你要搜索的内容" className="ml-[10px] flex-1 bg-transparent text-sm placeholder:text-[#444]" />
        <svg width="16" height="18" viewBox="0 0 16 18" fill="none" stroke="#333" strokeWidth="1.300" aria-hidden="true">
          <rect x="5" y="1" width="6" height="11" rx="1" />
          <path d="M3 9v2c0 3 10 3 10 0V9M8 14v3M5 17h6" />
        </svg>
      </label>
      <button aria-label="任务视图" className={clsx(TASK, 'w-12')}>
        <svg width="18" height="16" viewBox="0 0 18 16" fill="none" stroke="#fff" aria-hidden="true">
          <path d="M1.500 0v2.500h10V0M1.500 5.500h10v6h-10zM1.500 16v-2.500h10V16M15.500 0v3M15.500 8v8" />
          <path d="M14 4h3v3h-3z" fill="#fff" stroke="none" />
        </svg>
      </button>
      <button aria-label="风扇" className={clsx(TASK, 'w-[51px]')}>
        <svg width="22" height="22" viewBox="0 0 22 22" fill="#e8e8e8" aria-hidden="true">
          <circle cx="6" cy="6" r="5.500" />
          <circle cx="16" cy="6" r="5.500" />
          <circle cx="16" cy="16" r="5.500" />
          <circle cx="6" cy="16" r="5.500" />
          <path d="M6 6h10v10H6z" />
          <path d="M11 11C14 8 14 4 10.500 0M11 11c3 3 7 3 11-.5M11 11c-3 3-3 7 .5 11M11 11c-3-3-7-3-11 .5" stroke="#3a3a3a" strokeWidth="1.400" fill="none" />
        </svg>
      </button>
      <button aria-label="浏览器" className={clsx(TASK, 'w-[52px]')}>
        <svg width="24" height="24" viewBox="0 0 24 24" fill="none" stroke="#f0f0f0" aria-hidden="true">
          <path d="M6 12.500h14.500C20.500 7 17 4.500 13 4.500c-5 0-8 3.500-8 8s3 7.500 8 7.500c3 0 6-1.500 7-4.500" strokeWidth="3.400" />
          <path d="M20 6c2-4-1-5-6-2.500M5 12c-4 6-4 11 3 8" strokeWidth="1.600" />
        </svg>
      </button>
      <button aria-label="通知应用" className={clsx(TASK, 'w-[54px]')}>
        <svg width="28" height="26" viewBox="0 0 28 26" fill="none" stroke="#e4e4e4" strokeWidth="1.300" aria-hidden="true">
          <path d="M12 16c2 0 2-3 0-3-4 0-4 6 0 6 6 0 7-8 1-9-6 0-9 7-5 11 4 3 10 1 11-4M11 7C3 7-1 16 4 21M5 22c5 4 12 2 14-3" />
          <path d="M21 0c-4 0-4 4-4 6l-2 4h12l-2-4c0-2 0-6-4-6zM20 11h3v2h-3z" fill="#f2b90f" stroke="none" />
        </svg>
      </button>
      <button aria-label="GGJ2013" className={clsx(TASK, 'w-12 border-b-2 border-[#76b9ed] bg-[#5f6060] pt-px')}>
        <AppLogo size={24} />
      </button>
      <button aria-label="PDF" className={clsx(TASK, 'ml-[5px] w-10 border-b-2 border-[#76b9ed] pt-px')}>
        <span className="flex h-6 w-6 items-center justify-center rounded-sm border border-[#c9c9c9] bg-[#d46a0b] text-[9px] font-bold leading-none text-[#ffe9cf]">
          PDF
        </span>
      </button>
      <span className="flex-1" />
      <div className="flex h-10 w-4 flex-col items-center justify-between bg-[#f0f0f0] py-1">
        <Arrow dir="up" />
        <Arrow dir="down" />
      </div>
      <span className="ml-[11px] whitespace-nowrap">链接</span>
      <button aria-label="人脉" className="ml-[22px]">
        <svg width="16" height="16" viewBox="0 0 16 16" fill="none" stroke="#fff" strokeWidth="1.200" aria-hidden="true">
          <circle cx="10.500" cy="3.500" r="2.700" />
          <circle cx="4.500" cy="8.500" r="2.200" />
          <path d="M7.500 9.500c1-3.500 6.500-3.500 7.500 0M1 15c0-5 7-5 7 0" />
        </svg>
      </button>
      <div className="ml-[30px] w-[50px] whitespace-nowrap text-center leading-[17px]">
        <div>29%</div>
        <div>CPU使用</div>
      </div>
      <button aria-label="显示隐藏的图标" className="ml-[18px]">
        <svg width="14" height="8" fill="none" stroke="#fff" strokeWidth="1.300" aria-hidden="true"><path d="M1 7l6-6 6 6" /></svg>
      </button>
      <div className="ml-8 flex items-center gap-[7px]">
        <svg width="18" height="14" viewBox="0 0 18 14" fill="none" stroke="#fff" aria-hidden="true">
          <path d="M6.500 3.500h9v7h-9M16 5.500h1.500v3H16M1.500 1v3M4.500 1v3M.5 4.500h5v2c0 1.500-1 2-2.500 2s-2.500-.5-2.500-2zM3 9v1.500h4" />
        </svg>
        <svg width="14" height="14" viewBox="0 0 14 14" fill="none" stroke="#ddd" strokeWidth="1.200" aria-hidden="true">
          <path d="M1 12C1 6 6 1 13 1M4 12.500C4 8 8 4 13 4M7 13c0-3 3-6 6-6" />
          <path d="M10 13c0-2 1-3 3-3v3z" fill="#fff" />
        </svg>
        <svg width="16" height="14" viewBox="0 0 16 14" fill="none" stroke="#fff" aria-hidden="true">
          <path d="M1.500 5h2L7 1.500v11L3.500 9h-2zM10 4.500l5 5M15 4.500l-5 5" />
        </svg>
        <svg width="23" height="14" viewBox="0 0 23 14" fill="none" stroke="#fff" className="ml-[2px]" aria-hidden="true">
          <path d="M.5.500h22v12H.5zM5 10.500h13" />
          <path d="M3 4.500h17M3 7.500h17" strokeDasharray="1.500 1" />
        </svg>
        <span className="ml-1 text-[13px]">中</span>
        <span className="ml-1"><SogouLogo size={16} /></span>
      </div>
      <div className="ml-[18px] w-[62px] whitespace-nowrap text-center leading-[18px]">
        <div>17:58</div>
        <div>2018/9/28</div>
      </div>
      <button aria-label="通知" className="relative ml-4">
        <svg width="18" height="16" viewBox="0 0 18 16" fill="#fff" aria-hidden="true">
          <path d="M0 0h17v12H7l-3 3v-3H0z" />
          <path d="M3 3.500h11M3 6.500h11M3 9.500h6" stroke="#0a1719" />
        </svg>
        <span className="absolute -bottom-2 left-2 flex h-4 w-4 items-center justify-center rounded-full border border-[#999] bg-[#333] text-[11px] leading-none">
          1
        </span>
      </button>
      <span className="ml-5 mr-1 h-10 w-px bg-[#5a6466]" />
    </div>
  );
}

export default function App() {
  return (
    <div className="flex h-screen flex-col overflow-hidden bg-[#f0f0f0] font-['Noto_Sans','Noto_Sans_CJK_SC',sans-serif] text-xs text-black">
      <TitleBar />
      <MenuBar />
      <MainToolbar />
      <main className="relative flex min-h-0 flex-1 pt-px">
        <ModulePanel />
        <div className="ml-[6px] flex min-w-0 flex-1 flex-col">
          <ComponentToolbar />
          <div className="flex min-h-0 flex-1 pb-px">
            <ComponentList />
            <PropertyPanel />
          </div>
        </div>
        <SectionDialog />
      </main>
      <StatusBar />
      <Taskbar />
    </div>
  );
}
